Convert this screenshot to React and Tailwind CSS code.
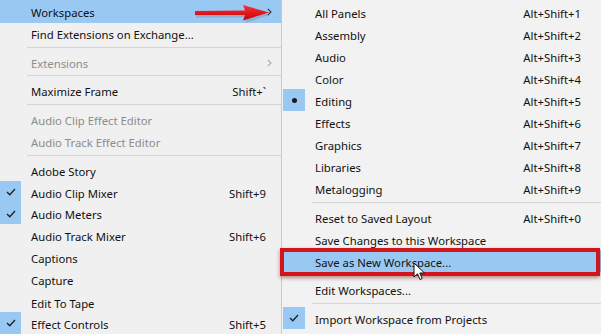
import React from "react";

const font = { fontFamily: '"Noto Sans", "Segoe UI", sans-serif' };

const leftItems = [
  { label: "Workspaces", active: true, sub: true, h: "h-[23px]" },
  { label: "Find Extensions on Exchange..." },
  { sep: true },
  { label: "Extensions", disabled: true, sub: true },
  { sep: true },
  { label: "Maximize Frame", key: "Shift+`" },
  { sep: true, h: "h-[8px]" },
  { label: "Audio Clip Effect Editor", disabled: true },
  { label: "Audio Track Effect Editor", disabled: true },
  { sep: true, h: "h-[8px]" },
  { label: "Adobe Story" },
  { label: "Audio Clip Mixer", key: "Shift+9", check: true },
  { label: "Audio Meters", check: true },
  { label: "Audio Track Mixer", key: "Shift+6", h: "h-[23px]" },
  { label: "Captions" },
  { label: "Capture", h: "h-[23px]" },
  { label: "Edit To Tape" },
  { label: "Effect Controls", key: "Shift+5", check: true },
];

const rightItems = [
  { label: "All Panels", key: "Alt+Shift+1" },
  { label: "Assembly", key: "Alt+Shift+2" },
  { label: "Audio", key: "Alt+Shift+3" },
  { label: "Color", key: "Alt+Shift+4" },
  { label: "Editing", key: "Alt+Shift+5", dot: true },
  { label: "Effects", key: "Alt+Shift+6" },
  { label: "Graphics", key: "Alt+Shift+7" },
  { label: "Libraries", key: "Alt+Shift+8" },
  { label: "Metalogging", key: "Alt+Shift+9" },
  { sep: true },
  { label: "Reset to Saved Layout", key: "Alt+Shift+0" },
  { label: "Save Changes to this Workspace" },
  { label: "Save as New Workspace...", active: true },
  { gap: true },
  { label: "Edit Workspaces..." },
  { sep: true },
  { label: "Import Workspace from Projects", check: true },
];

function Check() {
  return (
    <svg width="10" height="8" viewBox="0 0 10 8">
      <polyline points="1,4 3.8,6.8 9,1" fill="none" stroke="#1f1f1f" strokeWidth="1.3" />
    </svg>
  );
}

function Chevron({ color }) {
  return (
    <svg width="5" height="8" viewBox="0 0 5 8">
      <polyline points="0.8,0.8 4,4 0.8,7.2" fill="none" stroke={color} strokeWidth="1.1" />
    </svg>
  );
}

function MenuRow({ item, side }) {
  const left = side === "left";
  if (item.sep) {
    return (
      <div className={`${item.h || "h-[7px]"} flex items-center ${left ? "pl-[27px]" : "pl-[30px]"}`}>
        <div className="h-px w-full bg-[#d5d5d5]" />
      </div>
    );
  }
  if (item.gap) return <div className="h-[6px]" />;

  return (
    <div
      className={`${item.h || "h-[22px]"} flex items-center ${item.active ? "bg-[#99c9f3]" : ""} ${
        item.disabled ? "text-[#8c8c8c]" : "text-[#111]"
      }`}
    >
      <div
        className={`${left ? "w-[21px]" : "w-[22px] ml-px"} h-full flex items-center justify-center ${
          item.check || item.dot ? "bg-[#99c9f3]" : ""
        }`}
      >
        {item.check && <Check />}
        {item.dot && <div className="w-[5px] h-[5px] rounded-full bg-[#1a1a1a]" />}
      </div>
      <span className="pl-[10px] pt-[3px] flex-1 whitespace-nowrap">{item.label}</span>
      {item.key && <span className={`pt-[3px] ${left ? "pr-[15px]" : "pr-[20px]"}`}>{item.key}</span>}
      {item.sub && (
        <span className="w-[15px] pt-[2px] flex items-center justify-start pl-[1px]">
          <Chevron color={item.disabled ? "#a8a8a8" : "#333"} />
        </span>
      )}
    </div>
  );
}

export default function App() {
  return (
    <div className="relative w-[601px] h-[334px] overflow-hidden bg-[#f0f0f0] text-[11.3px] leading-none flex" style={font}>
      {/* main menu */}
      <div className="w-[281px] flex flex-col shrink-0">
        {leftItems.map((item, i) => (
          <MenuRow key={i} item={item} side="left" />
        ))}
      </div>

      {/* Workspaces submenu */}
      <div className="flex-1 flex flex-col pt-[1px] border-l border-[#c9c9c9] bg-[#f2f2f2]">
        {rightItems.map((item, i) => (
          <MenuRow key={i} item={item} side="right" />
        ))}
      </div>

      {/* red arrow annotation */}
      <svg className="absolute left-[192px] top-[3px]" width="82" height="22" viewBox="0 0 82 22">
        <defs>
          <linearGradient id="arr" x1="0" y1="0" x2="0" y2="1">
            <stop offset="0" stopColor="#f03a3a" />
            <stop offset="0.5" stopColor="#e3161b" />
            <stop offset="1" stopColor="#b50d12" />
          </linearGradient>
        </defs>
        <path d="M3 9.5 L54 8.5 L52 3 L77 10 L52 18 L54 12.5 L3 12.5 Z" fill="#7a5a60" opacity="0.25" transform="translate(1,2)" />
        <path d="M3 8 L53 7.5 L51 2 L77 9.5 L51 17.5 L53 12 L3 12 Z" fill="url(#arr)" />
      </svg>

      {/* red highlight box */}
      <div className="absolute left-[280px] top-[248px] w-[320px] h-[28px] border-[4px] border-[#d2151b] shadow-[0_2px_4px_rgba(120,0,0,0.45)]" />

      {/* mouse cursor */}
      <svg className="absolute left-[413px] top-[262px]" width="14" height="20" viewBox="0 0 14 20">
        <path d="M1 1 L1 15 L4.5 11.8 L7 17.5 L9.2 16.5 L6.8 11 L11.5 11 Z" fill="#fff" stroke="#111" strokeWidth="1" strokeLinejoin="round" />
      </svg>
    </div>
  );
}
